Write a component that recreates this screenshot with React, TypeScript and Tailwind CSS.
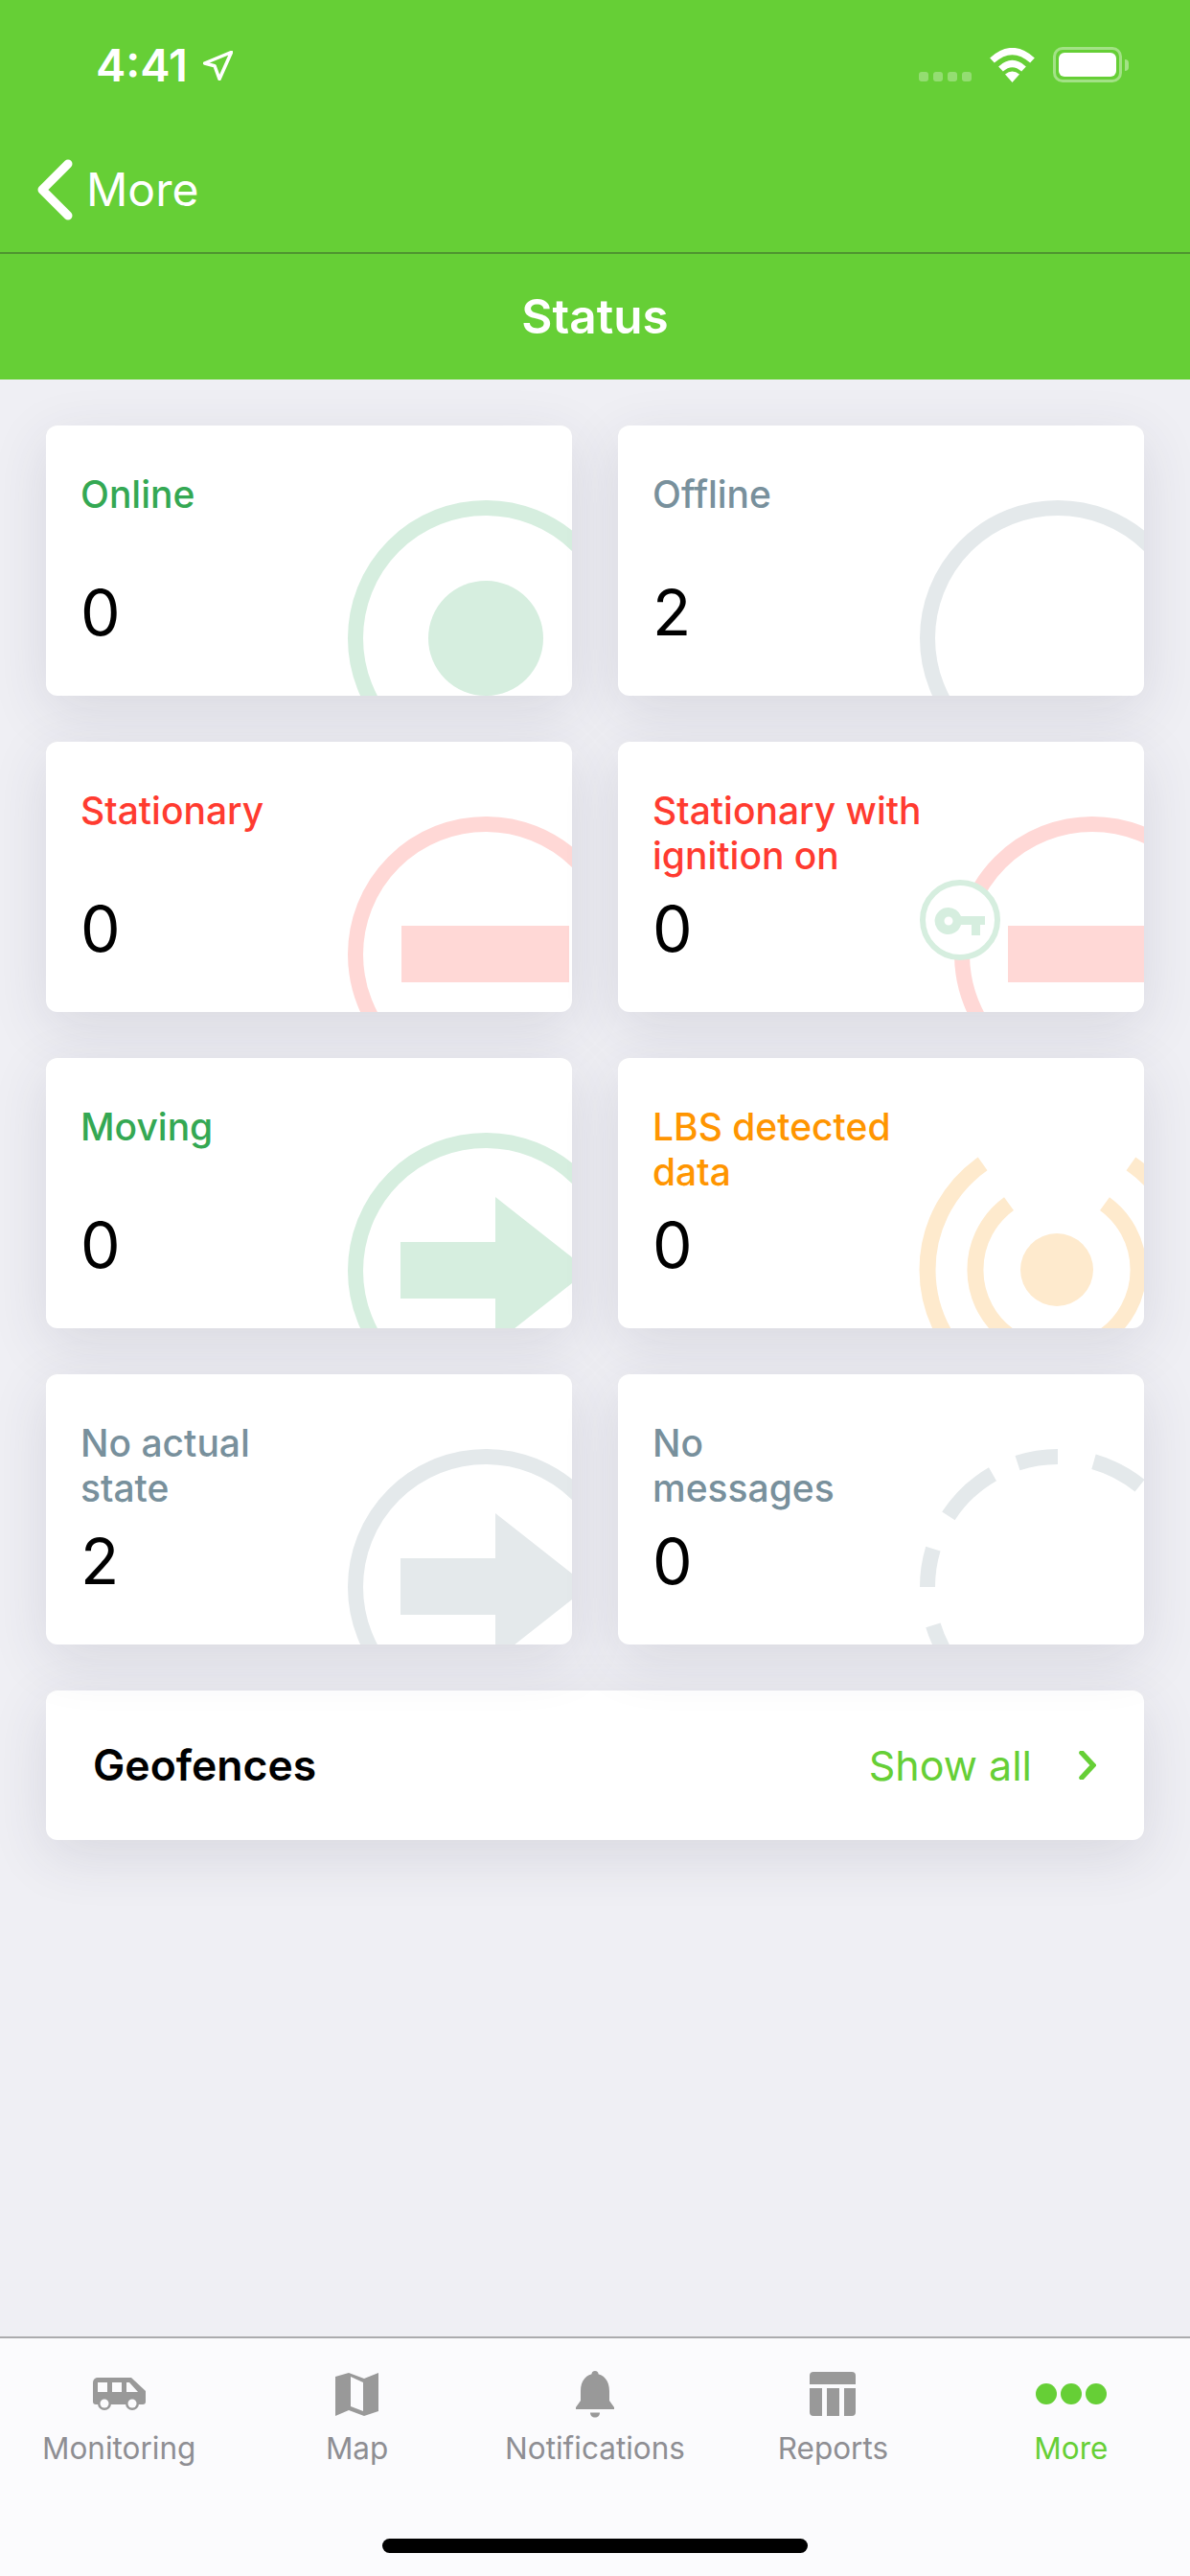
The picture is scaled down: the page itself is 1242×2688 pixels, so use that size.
const green = "#D6EEDF";
const red = "#FFD8D6";
const orange = "#FEEACD";
const gray = "#E4E9EB";

const Ring = ({ color, cx = 459 }: { color: string; cx?: number }) => (
    <circle cx={cx} cy={222} r={136} fill="none" stroke={color} strokeWidth={16} />
);

const Arrow = ({ color }: { color: string }) => (
    <path d="M370 192H469V145L566 221.5L469 298V251H370Z" fill={color} />
);

const arc = (r: number, from: number, to: number, cx = 459, cy = 222) => {
    const p = (a: number) => {
        const t = (a * Math.PI) / 180;
        return `${(cx + r * Math.sin(t)).toFixed(1)} ${(cy - r * Math.cos(t)).toFixed(1)}`;
    };
    return `M${p(from)}A${r} ${r} 0 ${to - from > 180 ? 1 : 0} 1 ${p(to)}`;
};

const graphics: Record<string, React.ReactNode> = {
    online: (
        <>
            <Ring color={green} />
            <circle cx={459} cy={222} r={60} fill={green} />
        </>
    ),
    offline: <Ring color={gray} />,
    stationary: (
        <>
            <Ring color={red} />
            <rect x={371} y={192} width={175} height={59} fill={red} />
        </>
    ),
    ignition: (
        <>
            <Ring color={red} cx={495} />
            <rect x={407} y={192} width={142} height={59} fill={red} />
            <circle cx={357} cy={186} r={39} fill="#fff" stroke={green} strokeWidth={6} />
            <path
                fillRule="evenodd"
                d="M345 173a14 14 0 0 1 13 9H383V191H378V202H369V191H358A14 14 0 1 1 345 173ZM345 182.500a4.500 4.500 0 1 0 0 9a4.500 4.500 0 0 0 0-9Z"
                fill={green}
            />
        </>
    ),
    moving: (
        <>
            <Ring color={green} />
            <Arrow color={green} />
        </>
    ),
    lbs: (
        <g fill="none" stroke={orange} strokeWidth={17}>
            <circle cx={458} cy={221} r={38} fill={orange} stroke="none" />
            <path d={arc(85, 36, 144, 458, 221)} />
            <path d={arc(85, 216, 324, 458, 221)} />
            <path d={arc(135, 35, 145, 458, 221)} />
            <path d={arc(135, 215, 325, 458, 221)} />
        </g>
    ),
    noState: (
        <>
            <Ring color={gray} />
            <Arrow color={gray} />
        </>
    ),
    noMessages: (
        <g fill="none" stroke={gray} strokeWidth={16}>
            <path d={arc(136, -18, 0)} />
            <path d={arc(136, 16, 39)} />
            <path d={arc(136, -57, -30)} />
            <path d={arc(136, -90, -73)} />
            <path d={arc(136, -135, -107)} />
        </g>
    ),
};

const statuses = [
    { id: "online", label: "Online", value: 0, color: "text-[#34A853]" },
    { id: "offline", label: "Offline", value: 2, color: "text-[#78909C]" },
    { id: "stationary", label: "Stationary", value: 0, color: "text-[#FF3B30]" },
    { id: "ignition", label: "Stationary with\nignition on", value: 0, color: "text-[#FF3B30]" },
    { id: "moving", label: "Moving", value: 0, color: "text-[#34A853]" },
    { id: "lbs", label: "LBS detected\ndata", value: 0, color: "text-[#FF9500]" },
    { id: "noState", label: "No actual\nstate", value: 2, color: "text-[#78909C]" },
    { id: "noMessages", label: "No\nmessages", value: 0, color: "text-[#78909C]" },
];

const StatusCard = ({ id, label, value, color }: (typeof statuses)[number]) => (
    <div className="relative h-[282px] overflow-hidden rounded-[12px] bg-white px-[36px] pt-[48px] shadow-[0_16px_60px_rgba(50,50,80,0.12)]">
        <svg viewBox="0 0 549 282" className="absolute inset-0 h-full w-full">
            {graphics[id]}
        </svg>
        <div className={`relative h-[94px] whitespace-pre-line text-[39px] font-[450] leading-[47px] ${color}`}>{label}</div>
        <div className="relative mt-[20px] text-[66px] leading-[66px] text-black">{value}</div>
    </div>
);

const VanIcon = () => (
    <svg viewBox="0 0 55 34" className="h-[34px] w-[55px]">
        <path d="M5 0H40L55 14V25a3 3 0 0 1-3 3H3a3 3 0 0 1-3-3V5a5 5 0 0 1 5-5Z" fill="#999" />
        <path d="M5 5H15V15H5ZM20 5H30V15H20ZM35 5H38L47 15H35Z" fill="#fbfbfd" />
        <circle cx={12} cy={27} r={7} fill="#999" />
        <circle cx={41} cy={27} r={7} fill="#999" />
        <circle cx={12} cy={27} r={4.5} fill="#fbfbfd" />
        <circle cx={41} cy={27} r={4.5} fill="#fbfbfd" />
    </svg>
);

const MapIcon = () => (
    <svg viewBox="0 0 45 45" className="h-[45px] w-[45px]">
        <path d="M0 4L14 0L30 6L45 0V40L30 45L14 39L0 45Z" fill="#999" />
        <path d="M16 4L29 10V40L16 35Z" fill="#fbfbfd" />
    </svg>
);

const BellIcon = () => (
    <svg viewBox="0 0 40 49" className="h-[49px] w-[40px]">
        <circle cx={20} cy={3.500} r={3.500} fill="#999" />
        <path d="M20 3C29 3 35 10 35 21V31L40 38V40H0V38L5 31V21C5 10 11 3 20 3Z" fill="#999" />
        <path d="M15 43.500H25C25 46.500 23 48.500 20 48.500S15 46.500 15 43.500Z" fill="#999" />
    </svg>
);

const ReportsIcon = () => (
    <svg viewBox="0 0 48 46" className="h-[46px] w-[48px]">
        <path d="M4 0H44a4 4 0 0 1 4 4V13H0V4a4 4 0 0 1 4-4Z" fill="#999" />
        <path d="M0 17H13V46H4a4 4 0 0 1-4-4ZM18 17H31V46H18ZM36 17H48V42a4 4 0 0 1-4 4H36Z" fill="#999" />
    </svg>
);

const MoreIcon = () => (
    <div className="flex gap-[4px]">
        <div className="size-[22px] rounded-full bg-[#66CF36]" />
        <div className="size-[22px] rounded-full bg-[#66CF36]" />
        <div className="size-[22px] rounded-full bg-[#66CF36]" />
    </div>
);

const tabs = [
    { label: "Monitoring", icon: <VanIcon /> },
    { label: "Map", icon: <MapIcon /> },
    { label: "Notifications", icon: <BellIcon /> },
    { label: "Reports", icon: <ReportsIcon /> },
    { label: "More", icon: <MoreIcon />, active: true },
];

const StatusBar = () => (
    <div className="flex h-[132px] items-start justify-between pl-[100px] pr-[64px] pt-[44px] text-white">
        <div className="flex items-center gap-[16px]">
            <span className="text-[47px] font-semibold leading-[48px]">4:41</span>
            <svg viewBox="0 0 31 31" className="h-[31px] w-[31px]">
                <path d="M1.500 13L29.500 1.500L17 29.500L12 15.700Z" fill="none" stroke="#fff" strokeWidth={3.500} strokeLinejoin="round" />
            </svg>
        </div>
        <div className="flex items-end gap-[19px] pt-[5px]">
            <div className="flex gap-[5px] pb-[1px]">
                <div className="size-[10px] rounded-[3px] bg-white/30" />
                <div className="size-[10px] rounded-[3px] bg-white/30" />
                <div className="size-[10px] rounded-[3px] bg-white/30" />
                <div className="size-[10px] rounded-[3px] bg-white/30" />
            </div>
            <svg viewBox="0 0 47 36" className="h-[36px] w-[47px]">
                <path d="M23.500 36L16 27.500Q23.500 21.500 31 27.500Z" fill="#fff" />
                <g fill="none" stroke="#fff" strokeWidth={7}>
                    <path d="M11.500 22Q23.500 11 35.500 22" />
                    <path d="M2.500 13Q23.500 -6 44.500 13" />
                </g>
            </svg>
            <div className="flex items-center gap-[3px]">
                <div className="h-[37px] w-[72px] rounded-[10px] border-[3px] border-white/40 p-[3px]">
                    <div className="h-full w-full rounded-[6px] bg-white" />
                </div>
                <div className="h-[12px] w-[4px] rounded-r-full bg-white/40" />
            </div>
        </div>
    </div>
);

export default function App() {
    return (
        <div
            className="flex h-[2688px] w-[1242px] flex-col overflow-hidden bg-[#EFEFF4]"
            style={{ fontFamily: "Inter, 'Liberation Sans', sans-serif" }}
        >
            <header className="bg-[#66CF36] text-white">
                <StatusBar />
                <div className="flex h-[133px] items-center gap-[14px] border-b-2 border-[#4F9530] pl-[38px]">
                    <svg viewBox="0 0 38 64" className="h-[64px] w-[38px]">
                        <path d="M33 5L6 32L33 59" fill="none" stroke="#fff" strokeWidth={9} strokeLinecap="round" strokeLinejoin="round" />
                    </svg>
                    <span className="text-[48px] leading-[60px]">More</span>
                </div>
                <div className="flex h-[131px] items-center justify-center text-[49.500px] font-semibold">Status</div>
            </header>

            <main className="flex flex-1 flex-col gap-[48px] px-[48px] pt-[48px]">
                <div className="grid grid-cols-2 gap-[48px]">
                    {statuses.map((s) => (
                        <StatusCard key={s.id} {...s} />
                    ))}
                </div>
                <div className="flex h-[156px] items-center justify-between rounded-[12px] bg-white pl-[49px] pr-[50px] shadow-[0_16px_60px_rgba(50,50,80,0.12)]">
                    <span className="text-[44.500px] font-semibold text-black">Geofences</span>
                    <div className="flex items-center gap-[49px] text-[43px] text-[#66CF36]">
                        <span>Show all</span>
                        <svg viewBox="0 0 18 30" className="h-[30px] w-[18px]">
                            <path d="M3 2L15 15L3 28" fill="none" stroke="#66CF36" strokeWidth={5.500} strokeLinecap="round" />
                        </svg>
                    </div>
                </div>
            </main>

            <footer className="relative h-[250px] border-t-2 border-[#ABABAE] bg-[#FBFBFD]">
                <nav className="flex pt-[30px]">
                    {tabs.map((t) => (
                        <div key={t.label} className="flex flex-1 flex-col items-center">
                            <div className="flex h-[56px] items-center justify-center">{t.icon}</div>
                            <span className={`mt-[9px] text-[31.500px] leading-[40px] ${t.active ? "text-[#66CF36]" : "text-[#8E8E93]"}`}>
                                {t.label}
                            </span>
                        </div>
                    ))}
                </nav>
                <div className="absolute bottom-[24px] left-[399px] h-[15px] w-[444px] rounded-full bg-black" />
            </footer>
        </div>
    );
}
